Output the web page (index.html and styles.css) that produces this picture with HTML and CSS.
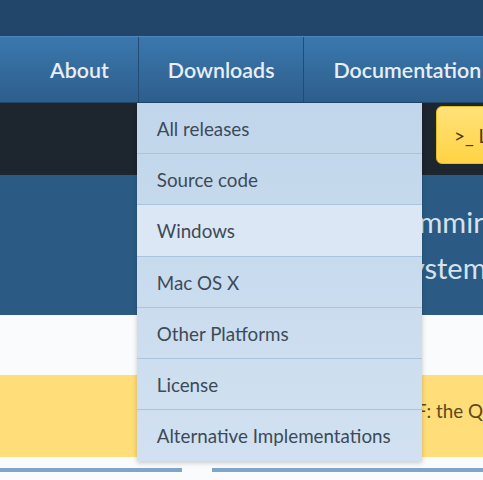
FILE: index.html
```html
<!DOCTYPE html>
<html lang="en">
<head>
    <meta charset="UTF-8">
    <title>Python Downloads</title>
    <link rel="stylesheet" href="styles.css">
</head>
<body>
    <div class="top-bar"></div>

    <nav class="main-nav">
        <div class="nav-item first">About</div>
        <div class="nav-item has-menu">
            Downloads
            <ul class="dropdown">
                <li>All releases</li>
                <li>Source code</li>
                <li class="active">Windows</li>
                <li>Mac OS X</li>
                <li>Other Platforms</li>
                <li>License</li>
                <li>Alternative Implementations</li>
            </ul>
        </div>
        <div class="nav-item">Documentation</div>
    </nav>

    <div class="shell-strip">
        <button class="shell-btn">&gt;_ Launch Interactive Shell</button>
    </div>

    <div class="hero">
        <div class="hero-inner">
            <p class="hero-line line-one">Python is a programming language that lets you</p>
            <p class="hero-line line-two">work quickly and integrate systems more effectively.</p>
        </div>
    </div>

    <div class="spacer"></div>

    <div class="notice">
        <div class="notice-inner">
            <p class="notice-text">Join the PSF: the Quest for a better Python continues</p>
        </div>
    </div>

    <div class="rules">
        <span class="rule rule-left"></span>
        <span class="rule rule-right"></span>
    </div>
</body>
</html>
```

FILE: styles.css
```css
* {
    margin: 0;
    padding: 0;
    box-sizing: border-box;
}

body {
    font-family: Lato, 'Open Sans', sans-serif;
    background: #fafbfc;
    width: 483px;
    height: 480px;
    overflow: hidden;
}

.top-bar {
    height: 36px;
    background: #22466a;
}

.main-nav {
    display: flex;
    height: 67px;
    padding-left: 21px;
    background: linear-gradient(#3b78ad, #2d5e8c);
    border-top: 1px solid #4a86ba;
    border-bottom: 1px solid #22476b;
}

.nav-item {
    position: relative;
    flex-shrink: 0;
    padding: 0 29px;
    line-height: 66px;
    font-size: 21.4px;
    font-weight: 600;
    color: #e8eef5;
    border-left: 1px solid #234b73;
    white-space: nowrap;
}

.nav-item.first {
    border-left: none;
}

.dropdown {
    position: absolute;
    top: 66px;
    left: -2px;
    width: 285px;
    list-style: none;
    background: linear-gradient(#c1d6eb, #d1e1f1);
    box-shadow: 0 2px 5px rgba(0, 0, 0, 0.2);
    z-index: 5;
}

.dropdown li {
    height: 51.2px;
    line-height: 51px;
    padding-left: 20px;
    font-size: 18.8px;
    font-weight: 400;
    color: #3d4a58;
    border-bottom: 1px solid #a9c4dd;
}

.dropdown li:last-child {
    border-bottom: none;
}

.dropdown li.active {
    background: #dbe7f4;
}

.shell-strip {
    height: 72px;
    background: #1d252f;
    padding: 3px 0 0 436px;
}

.shell-btn {
    height: 58px;
    width: 260px;
    padding-left: 17px;
    text-align: left;
    font-family: Lato, sans-serif;
    font-size: 19px;
    color: #4a3b10;
    background: linear-gradient(#ffe27a, #ffd343);
    border: 1px solid #e8b92a;
    border-radius: 6px;
    white-space: nowrap;
}

.hero {
    height: 140px;
    background: #2b5b84;
    padding-top: 24px;
}

/* keep the long lines from showing left of the menu */
.hero-inner,
.notice-inner {
    margin-left: 150px;
    overflow: hidden;
}

.hero-line,
.notice-text {
    margin-left: -500px;
    white-space: nowrap;
    text-align: right;
}

.hero-line {
    font-size: 29px;
    line-height: 46px;
    color: #d6e2ee;
}

.line-one {
    margin-right: -307px;
}

.line-two {
    margin-right: -235px;
}

.spacer {
    height: 60px;
}

.notice {
    height: 82px;
    background: #ffdd78;
    padding-top: 24px;
}

.notice-text {
    font-size: 18.8px;
    color: #5a4a1c;
    margin-right: -281px;
}

.rules {
    display: flex;
    gap: 30px;
    margin-top: 11px;
}

.rule {
    height: 4px;
    background: #7ea6cb;
}

.rule-left {
    width: 182px;
}

.rule-right {
    flex: 1;
}
```
